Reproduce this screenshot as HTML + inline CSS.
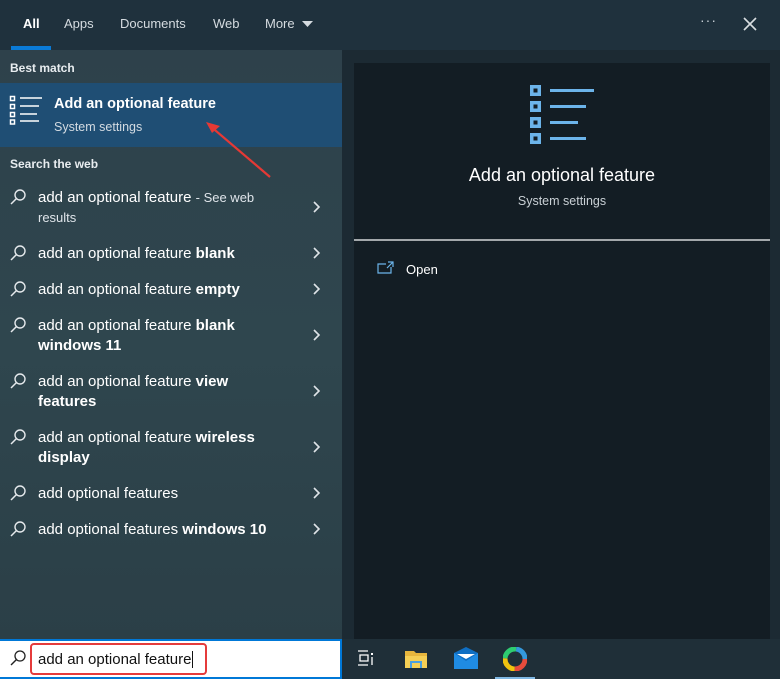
<!DOCTYPE html>
<html><head><meta charset="utf-8"><style>
*{margin:0;padding:0;box-sizing:border-box}
body{width:780px;height:679px;overflow:hidden;background:#1e2d38;font-family:"Liberation Sans",sans-serif;color:#fff;position:relative}
.a{position:absolute}
.top{left:0;top:0;width:780px;height:50px;background:#1f313d}
.tab{top:16px;font-size:13px;color:#d5dbe0}
.left{left:0;top:50px;width:342px;height:590px;background:linear-gradient(180deg,#2e414b 0%,#2f464e 50%,#2b3f47 100%)}
.right{left:342px;top:50px;width:438px;height:590px;background:#1c2a33}
.box{left:354px;top:63px;width:416px;height:577px;background:#131d24}
.hdr{font-size:12px;font-weight:bold;color:#e8edf0;left:10px}
.item{left:38px;font-size:15px;color:#fff;line-height:20px}
.item b{font-weight:bold}
.sr{left:10px}
</style></head><body>
<div class="a top"></div>
<div class="a tab" style="left:23px;color:#fff;font-weight:bold">All</div>
<div class="a" style="left:11px;top:46px;width:40px;height:4px;background:#0a7ad6"></div>
<div class="a tab" style="left:64px">Apps</div>
<div class="a tab" style="left:120px">Documents</div>
<div class="a tab" style="left:213px">Web</div>
<div class="a tab" style="left:265px">More</div>
<svg class="a" style="left:302px;top:21px" width="11" height="6"><path d="M0 0H11L5.5 6Z" fill="#d5dbe0"/></svg>
<div class="a" style="left:700px;top:12px;color:#c8d0d6;font-size:14px;letter-spacing:1px">···</div>
<svg class="a" style="left:743px;top:17px" width="14" height="14"><path d="M1 1L13 13M13 1L1 13" stroke="#d8dde0" stroke-width="1.6"/></svg>

<div class="a left"></div>
<div class="a right"></div>
<div class="a box"></div>

<div class="a hdr" style="top:61px">Best match</div>
<div class="a" style="left:0;top:83px;width:342px;height:64px;background:#1f4e74"></div>
<svg class="a" style="left:9px;top:95px" width="34" height="30" fill="none" stroke="#fff" stroke-width="1.5">
<rect x="1.5" y="1.5" width="4" height="4"/><rect x="1.5" y="9.5" width="4" height="4"/><rect x="1.5" y="17.5" width="4" height="4"/><rect x="1.5" y="25" width="4" height="4"/>
<path d="M11 3H33M11 11H30M11 19H28M11 26H30"/></svg>
<div class="a" style="left:54px;top:96px;font-size:14.5px;font-weight:bold">Add an optional feature</div>
<div class="a" style="left:54px;top:120px;font-size:12.5px;color:#d3dbe2">System settings</div>
<svg class="a" style="left:200px;top:115px" width="75" height="65"><path d="M70 62L9 10" stroke="#e53935" stroke-width="2.2"/><path d="M6 7L20 11L12 18Z" fill="#e53935"/></svg>

<div class="a hdr" style="top:157px">Search the web</div>

<svg width="0" height="0" style="position:absolute"><defs><g id="s"><circle cx="10" cy="6" r="5" fill="none" stroke="#e5e9ec" stroke-width="1.4"/><path d="M6.5 9.5L1 15" stroke="#e5e9ec" stroke-width="1.5"/></g><path id="c" d="M1 1L6 6L1 11" fill="none" stroke="#dfe4e8" stroke-width="1.6"/></defs></svg>

<svg class="a sr" style="top:189px" width="18" height="17"><use href="#s"/></svg>
<div class="a item" style="top:188px">add an optional feature <span style="font-size:13px;color:#dfe5ea">- See web</span><br><span style="font-size:13px;color:#dfe5ea">results</span></div>
<svg class="a" style="left:313px;top:201px" width="8" height="13"><use href="#c"/></svg>

<svg class="a sr" style="top:245px" width="18" height="17"><use href="#s"/></svg>
<div class="a item" style="top:244px">add an optional feature <b>blank</b></div>
<svg class="a" style="left:313px;top:247px" width="8" height="13"><use href="#c"/></svg>

<svg class="a sr" style="top:281px" width="18" height="17"><use href="#s"/></svg>
<div class="a item" style="top:280px">add an optional feature <b>empty</b></div>
<svg class="a" style="left:313px;top:283px" width="8" height="13"><use href="#c"/></svg>

<svg class="a sr" style="top:317px" width="18" height="17"><use href="#s"/></svg>
<div class="a item" style="top:316px">add an optional feature <b>blank<br>windows 11</b></div>
<svg class="a" style="left:313px;top:329px" width="8" height="13"><use href="#c"/></svg>

<svg class="a sr" style="top:373px" width="18" height="17"><use href="#s"/></svg>
<div class="a item" style="top:372px">add an optional feature <b>view<br>features</b></div>
<svg class="a" style="left:313px;top:385px" width="8" height="13"><use href="#c"/></svg>

<svg class="a sr" style="top:429px" width="18" height="17"><use href="#s"/></svg>
<div class="a item" style="top:428px">add an optional feature <b>wireless<br>display</b></div>
<svg class="a" style="left:313px;top:441px" width="8" height="13"><use href="#c"/></svg>

<svg class="a sr" style="top:485px" width="18" height="17"><use href="#s"/></svg>
<div class="a item" style="top:484px">add optional features</div>
<svg class="a" style="left:313px;top:487px" width="8" height="13"><use href="#c"/></svg>

<svg class="a sr" style="top:521px" width="18" height="17"><use href="#s"/></svg>
<div class="a item" style="top:520px">add optional features <b>windows 10</b></div>
<svg class="a" style="left:313px;top:523px" width="8" height="13"><use href="#c"/></svg>

<svg class="a" style="left:529px;top:82px" width="66" height="62" fill="#6cb4ea">
<rect x="1" y="3" width="11" height="11"/><rect x="1" y="19" width="11" height="11"/><rect x="1" y="35" width="11" height="11"/><rect x="1" y="51" width="11" height="11"/>
<rect x="4.5" y="6.5" width="4" height="4" fill="#131d24"/><rect x="4.5" y="22.5" width="4" height="4" fill="#131d24"/><rect x="4.5" y="38.5" width="4" height="4" fill="#131d24"/><rect x="4.5" y="54.5" width="4" height="4" fill="#131d24"/>
<rect x="21" y="7" width="44" height="3"/><rect x="21" y="23" width="36" height="3"/><rect x="21" y="39" width="28" height="3"/><rect x="21" y="55" width="36" height="3"/></svg>
<div class="a" style="left:354px;width:416px;top:165px;text-align:center;font-size:18px">Add an optional feature</div>
<div class="a" style="left:354px;width:416px;top:194px;text-align:center;font-size:12.5px;color:#c9d0d5">System settings</div>
<div class="a" style="left:354px;top:239px;width:416px;height:2px;background:#a3a8ab"></div>
<svg class="a" style="left:377px;top:261px" width="17" height="13" fill="none" stroke="#6cb4ea" stroke-width="1.2"><path d="M9 3H1V12H14V6"/><path d="M11 1H16V6M16 1L10 7"/></svg>
<div class="a" style="left:406px;top:262px;font-size:13px">Open</div>

<div class="a" style="left:0;top:639px;width:342px;height:40px;background:#0078d7"></div>
<div class="a" style="left:0;top:641px;width:340px;height:36px;background:#fff"></div>
<svg class="a" style="left:9px;top:650px" width="18" height="17"><circle cx="11" cy="6" r="5" fill="none" stroke="#222" stroke-width="1.3"/><path d="M7.5 9.5L2 15" stroke="#222" stroke-width="1.4"/></svg>
<div class="a" style="left:30px;top:643px;width:177px;height:32px;border:2.5px solid #e53b3b;border-radius:4px"></div>
<div class="a" style="left:38px;top:651px;font-size:15px;color:#111">add an optional feature<span style="border-left:1px solid #111;margin-left:1px"></span></div>
<div class="a" style="left:342px;top:639px;width:438px;height:40px;background:#1f2f38"></div>
<svg class="a" style="left:357px;top:650px" width="18" height="16" fill="none" stroke="#fff" stroke-width="1.3"><path d="M1 1H11M1 15H11M3 5H11V11H3Z"/><rect x="14" y="3" width="2" height="2" fill="#fff" stroke="none"/><path d="M15 7V15"/></svg>
<svg class="a" style="left:405px;top:649px" width="23" height="20"><path d="M0 2H9L11 4H22V19H0Z" fill="#e7b63d"/><rect x="0" y="7" width="22" height="12" fill="#f5cf55"/><path d="M6 19V13H16V19" fill="none" stroke="#4a9fe0" stroke-width="2"/></svg>
<svg class="a" style="left:453px;top:647px" width="26" height="22"><rect x="1" y="6" width="24" height="16" fill="#1f8be2"/><path d="M1 6L13 0L25 6L13 14Z" fill="#0f6fc3"/><path d="M4 7L13 12L22 7Z" fill="#fff"/></svg>
<svg class="a" style="left:503px;top:647px" width="24" height="24"><circle cx="12" cy="12" r="10" fill="none" stroke="#e74c3c" stroke-width="5" stroke-dasharray="16 100"/><circle cx="12" cy="12" r="10" fill="none" stroke="#f1c40f" stroke-width="5" stroke-dasharray="0 16 16 100"/><circle cx="12" cy="12" r="10" fill="none" stroke="#2ecc71" stroke-width="5" stroke-dasharray="0 32 16 100"/><circle cx="12" cy="12" r="10" fill="none" stroke="#3498db" stroke-width="5" stroke-dasharray="0 48 16 100"/><circle cx="12" cy="12" r="4" fill="#1f2f38"/></svg>
<div class="a" style="left:495px;top:677px;width:40px;height:2px;background:#7fb8e4"></div>
</body></html>
